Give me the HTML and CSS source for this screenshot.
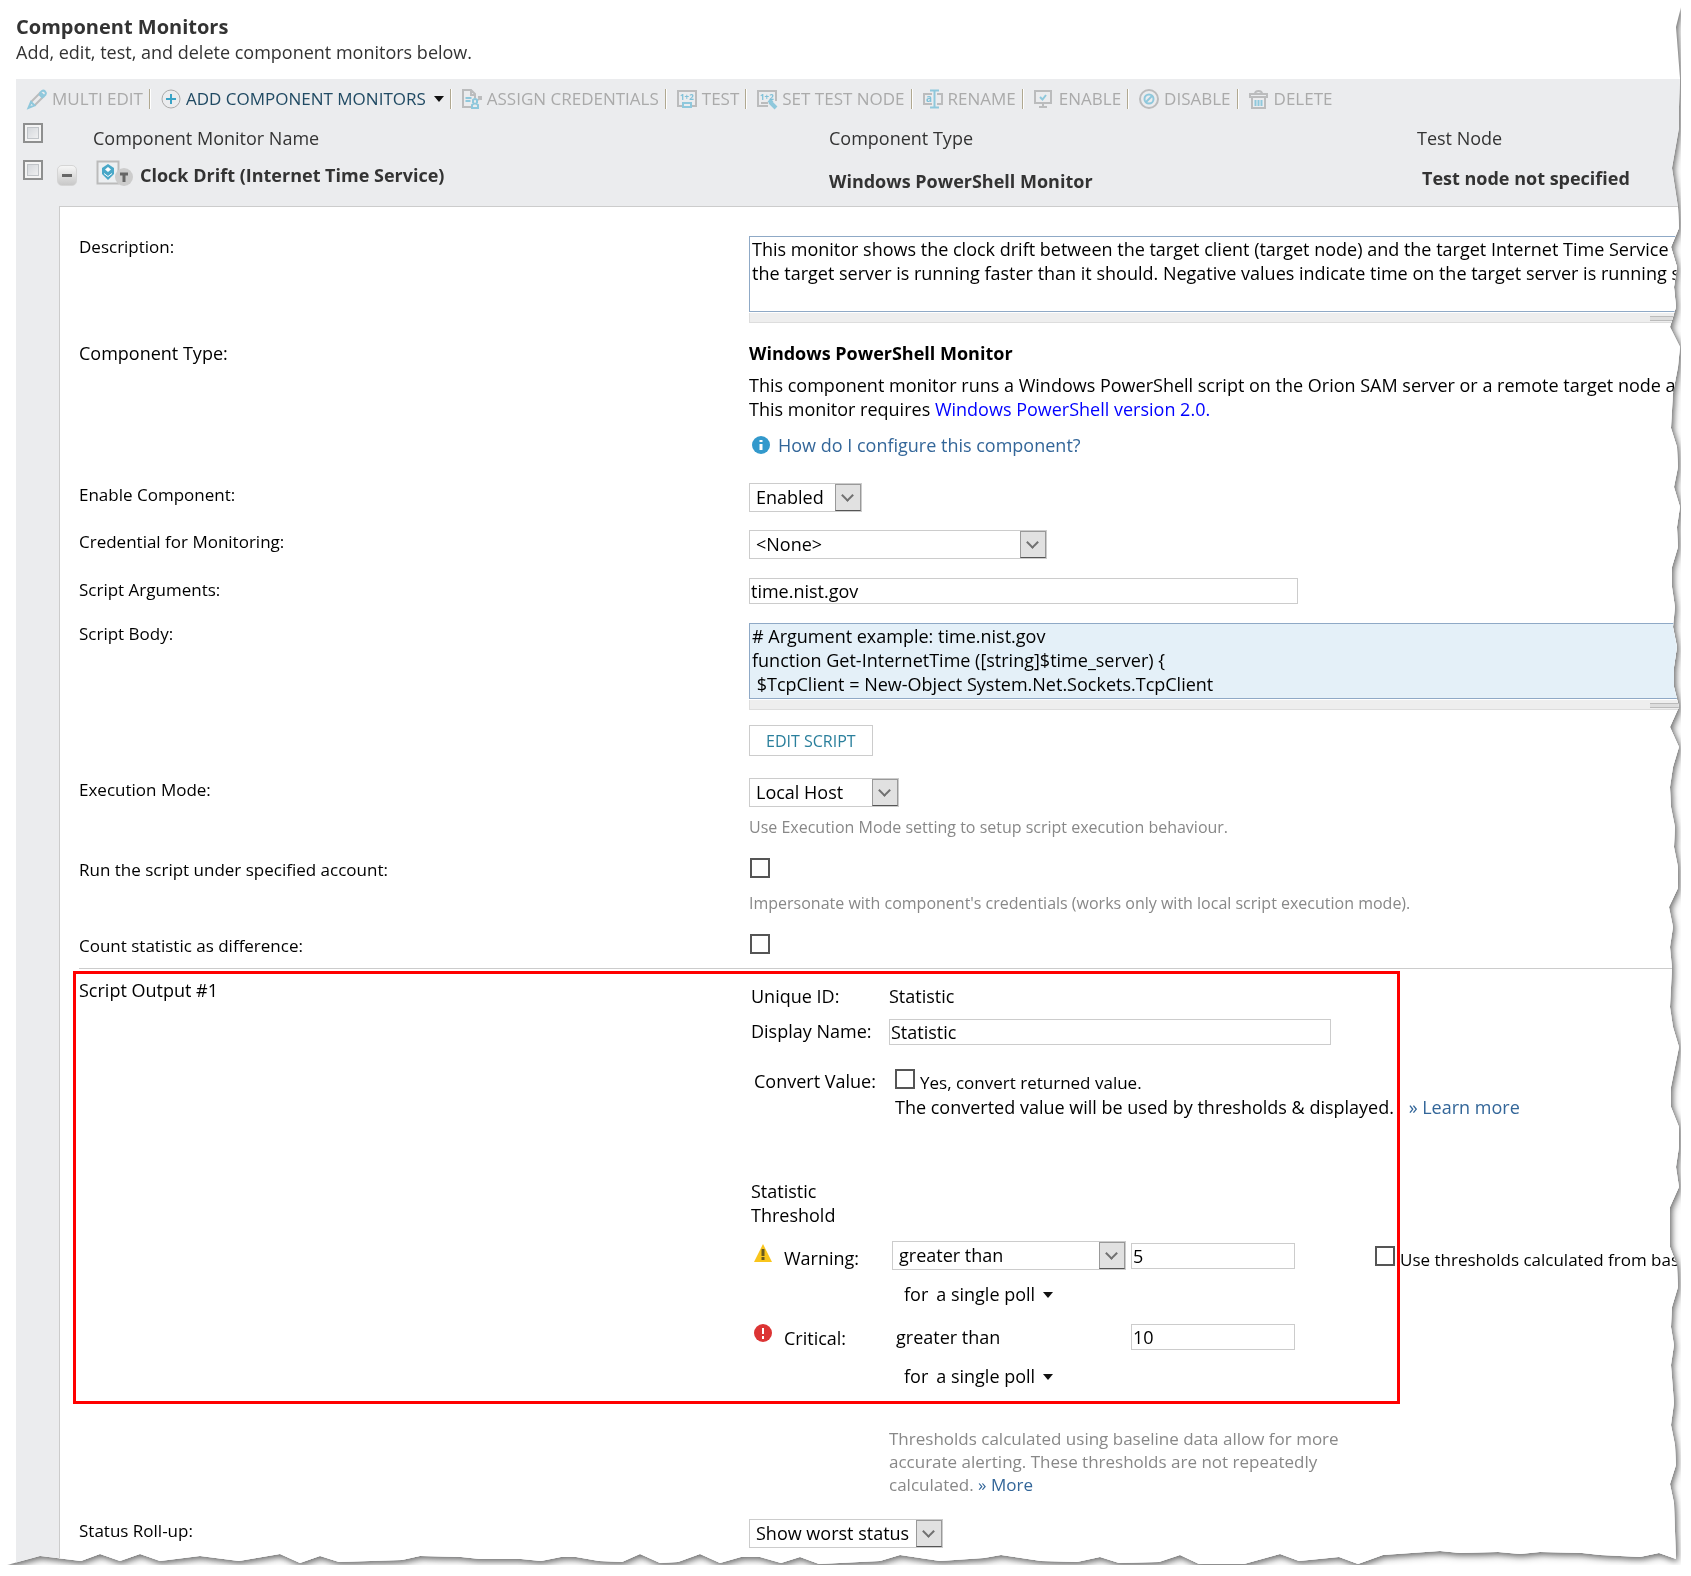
FILE: index.html
```html
<!DOCTYPE html>
<html lang="en">
<head>
    <meta charset="UTF-8">
    <meta name="viewport" content="width=device-width, initial-scale=1.0">
    <title>Component Monitors</title>
    <link rel="stylesheet" href="styles.css">
</head>
<body>

<div class="shadow">
<main class="sheet">
    <h1>Component Monitors</h1>
    <p class="intro">Add, edit, test, and delete component monitors below.</p>

    <div class="grid-panel">
        <div class="toolbar">
            <button type="button" disabled>
                <svg class="icon" viewBox="0 0 20 20"><path class="g" d="M4 13 13.500 3.500M7.500 16.500 17 7"/><path class="b" d="M13.500 3.500 15 2q1.500-1 3 .5t.5 3L17 7zM12 5l4 4M4 13l-2.500 6 6-2.500z"/></svg>
                MULTI EDIT
            </button>
            <button type="button" class="active">
                <svg class="icon" viewBox="0 0 20 20"><circle class="g2" cx="10" cy="10" r="9"/><path class="b2" d="M10 5v10M5 10h10"/></svg>
                ADD COMPONENT MONITORS
                <span class="caret"></span>
            </button>
            <button type="button" disabled>
                <svg class="icon" viewBox="0 0 20 20"><path class="g" d="M9 18H1V1h8l4 4v4M9 1v5h4M16 11l3-3M16 8h3v3"/><path class="b" d="M3.500 9h6M3.500 12h5M11 14V11q2-2 4 0v3M10 19v-3q3-3 6 0v3z"/></svg>
                ASSIGN CREDENTIALS
            </button>
            <button type="button" disabled>
                <svg class="icon" viewBox="0 0 20 20"><path class="g" d="M5 17H1V2h18v15h-4"/><path class="b" d="M6 14h8v4H6z"/><text x="3" y="11">1+2</text></svg>
                TEST
            </button>
            <button type="button" disabled>
                <svg class="icon" viewBox="0 0 20 20"><path class="g" d="M11 17H1V2h18v10M4 14h7"/><path class="b3" d="M13 13l6 6M12 14l3-3"/><text x="3" y="11">1+2</text></svg>
                SET TEST NODE
            </button>
            <button type="button" disabled>
                <svg class="icon" viewBox="0 0 20 20"><path class="g" d="M9 15H1V5h8M14 5h5v10h-5"/><path class="b" d="M7 1.500h9M11.500 1.500v17M7 18.500h9"/><text class="letter" x="3" y="13">a</text></svg>
                RENAME
            </button>
            <button type="button" disabled>
                <svg class="icon" viewBox="0 0 20 20"><path class="g" d="M1 2h16v12H1zM9 14v3M5 18h8"/><path class="b" d="M6 8l2.500 2.500L12 6"/></svg>
                ENABLE
            </button>
            <button type="button" disabled>
                <svg class="icon" viewBox="0 0 20 20"><circle class="g2" cx="10" cy="10" r="9"/><circle class="b" cx="10" cy="10" r="4.500"/><path class="b" d="M7 13l6-6"/></svg>
                DISABLE
            </button>
            <button type="button" disabled>
                <svg class="icon" viewBox="0 0 20 20"><path class="g" d="M1 5h17v3H1zM6 5q0-3 3.500-3T13 5M3 8v11h13V8"/><path class="b" d="M6.500 11v6M9.500 11v6M12.500 11v6"/></svg>
                DELETE
            </button>
        </div>

        <div class="grid-row grid-head">
            <input type="checkbox" class="classic" aria-label="Select all">
            <span>Component Monitor Name</span>
            <span>Component Type</span>
            <span>Test Node</span>
        </div>
        <div class="grid-row grid-item">
            <div class="pick">
                <input type="checkbox" class="classic" aria-label="Select Clock Drift">
                <button type="button" class="collapse" aria-label="Collapse"></button>
            </div>
            <div class="monitor">
                <svg class="monitor-icon" viewBox="0 0 37 26"><rect x="1.500" y="1.500" width="21" height="22" fill="#eceff1" stroke="#bbb" stroke-width="2"/><path d="M12 4l6 4v6L12 20l-6-6v-6z" fill="#49a8c8"/><path d="M12 7l3 2.500-3 2.500-3-2.500z" fill="#fff"/><path d="M8 13.500l4 3 4-3" fill="none" stroke="#fff"/><circle cx="28" cy="17" r="9" fill="#ccc"/><path d="M24 14h8M28 14v8" stroke="#666" stroke-width="3"/></svg>
                <strong>Clock Drift (Internet Time Service)</strong>
            </div>
            <strong class="type">Windows PowerShell Monitor</strong>
            <strong class="node">Test node not specified</strong>
        </div>

        <form class="details">
            <div class="row">
                <label for="description">Description:</label>
                <div class="resizable">
                    <textarea id="description">This monitor shows the clock drift between the target client (target node) and the target Internet Time Service
the target server is running faster than it should. Negative values indicate time on the target server is running s</textarea>
                    <div class="resizer"></div>
                </div>
            </div>

            <div class="row component-type">
                <span class="heading">Component Type:</span>
                <div>
                    <strong>Windows PowerShell Monitor</strong>
                    <p>This component monitor runs a Windows PowerShell script on the Orion SAM server or a remote target node a<br>
                    This monitor requires <a class="plain" href="#">Windows PowerShell version 2.0.</a></p>
                    <a class="help" href="#">
                        <svg viewBox="0 0 18 18"><circle cx="9" cy="9" r="9" fill="#3399cc"/><path d="M9 4v2M9 8v6" stroke="#fff" stroke-width="3"/></svg>
                        How do I configure this component?
                    </a>
                </div>
            </div>

            <div class="row">
                <label for="enabled">Enable Component:</label>
                <div class="select enabled"><select id="enabled"><option>Enabled</option><option>Disabled</option></select></div>
            </div>

            <div class="row loose">
                <label for="credential">Credential for Monitoring:</label>
                <div class="select credential"><select id="credential"><option>&lt;None&gt;</option></select></div>
            </div>

            <div class="row">
                <label for="arguments">Script Arguments:</label>
                <input type="text" class="arguments" id="arguments" value="time.nist.gov">
            </div>

            <div class="row script-body">
                <label for="script">Script Body:</label>
                <div class="resizable">
                    <textarea id="script" class="readonly" readonly># Argument example: time.nist.gov
function Get-InternetTime ([string]$time_server) {
 $TcpClient = New-Object System.Net.Sockets.TcpClient</textarea>
                    <div class="resizer"></div>
                    <button type="button" class="edit-script">EDIT SCRIPT</button>
                </div>
            </div>

            <div class="row loose">
                <label for="mode">Execution Mode:</label>
                <div>
                    <div class="select mode"><select id="mode"><option>Local Host</option><option>Remote Host</option></select></div>
                    <p class="hint">Use Execution Mode setting to setup script execution behaviour.</p>
                </div>
            </div>

            <div class="row loose">
                <label for="account">Run the script under specified account:</label>
                <div>
                    <input type="checkbox" id="account">
                    <p class="hint">Impersonate with component's credentials (works only with local script execution mode).</p>
                </div>
            </div>

            <div class="row">
                <label for="difference">Count statistic as difference:</label>
                <input type="checkbox" id="difference">
            </div>

            <div class="row output">
                <div class="highlight"></div>
                <span class="heading">Script Output #1</span>
                <div class="fields">
                    <span>Unique ID:</span>
                    <span>Statistic</span>

                    <label for="display">Display Name:</label>
                    <input type="text" class="display" id="display" value="Statistic">

                    <span class="convert-label">Convert Value:</span>
                    <div class="convert">
                        <div class="check">
                            <input type="checkbox" id="convert">
                            <label for="convert">Yes, convert returned value.</label>
                        </div>
                        <div class="note">The converted value will be used by thresholds &amp; displayed. <a href="#">» Learn more</a></div>
                    </div>

                    <span class="threshold-label">Statistic Threshold</span>

                    <label class="level" for="warning">
                        <svg viewBox="0 0 18 18"><path d="M9 0l9 18H0z" fill="#f9c51c"/><path d="M9 5v7M9 13v3" stroke="#6b5a1e" stroke-width="3"/></svg>
                        Warning:
                    </label>
                    <div class="threshold">
                        <div class="select operator"><select aria-label="Warning operator"><option>greater than</option><option>less than</option></select></div>
                        <input type="text" id="warning" value="5">
                        <div class="check baseline">
                            <input type="checkbox" id="baseline">
                            <label for="baseline">Use thresholds calculated from base</label>
                        </div>
                    </div>
                    <div class="poll"><span>for</span> <button type="button">a single poll <span class="caret"></span></button></div>

                    <label class="level" for="critical">
                        <svg viewBox="0 0 18 18"><circle cx="9" cy="9" r="9" fill="#dc3434"/><path d="M9 4v6M9 12v3" stroke="#fff" stroke-width="2"/></svg>
                        Critical:
                    </label>
                    <div class="threshold">
                        <span class="operator">greater than</span>
                        <input type="text" id="critical" value="10">
                    </div>
                    <div class="poll"><span>for</span> <button type="button">a single poll <span class="caret"></span></button></div>

                    <p class="baseline-note">Thresholds calculated using baseline data allow for more accurate alerting. These thresholds are not repeatedly calculated. <a href="#">» More</a></p>
                </div>
            </div>

            <div class="row rollup">
                <label for="rollup">Status Roll-up:</label>
                <div class="select status"><select id="rollup"><option>Show worst status</option><option>Show best status</option></select></div>
            </div>
        </form>
    </div>
</main>
</div>

</body>
</html>
```
FILE: styles.css
```css
*, *::before, *::after {
    box-sizing: border-box;
}

body {
    margin: 7px 10px 0 7px;
    background: #fff;
    color: #000;
    font-family: "Open Sans", "Noto Sans", sans-serif;
    font-size: 18px;
    line-height: 24px;
    overflow-x: hidden;
}

h1, p {
    margin: 0;
}

a {
    color: #336699;
    text-decoration: none;
}

button, input, select, textarea {
    font: inherit;
    color: inherit;
    margin: 0;
}

/* torn paper edge */
.shadow {
    filter: drop-shadow(0 0 3px rgba(0, 0, 0, 0.4)) drop-shadow(2px 3px 3px rgba(0, 0, 0, 0.4));
}

.sheet {
    background: #fff;
    padding: 6px 0 0 9px;
    overflow: hidden;
    clip-path: polygon(0 0, 100% 0,
        calc(100% - 5px) 20px, calc(100% - 1px) 71px, calc(100% - 2px) 100px, calc(100% - 2px) 121px,
        calc(100% - 9px) 161px, calc(100% - 3px) 200px, calc(100% - 2px) 221px, calc(100% - 10px) 240px,
        calc(100% - 4px) 260px, calc(100% - 7px) 280px, calc(100% - 5px) 300px, calc(100% - 11px) 320px,
        calc(100% - 1px) 340px, calc(100% - 3px) 360px, calc(100% - 8px) 386px, calc(100% - 10px) 421px,
        calc(100% - 4px) 440px, calc(100% - 3px) 460px, calc(100% - 7px) 480px, calc(100% - 1px) 500px,
        calc(100% - 4px) 520px, calc(100% - 3px) 540px, calc(100% - 9px) 560px, calc(100% - 9px) 580px,
        calc(100% - 6px) 600px, calc(100% - 8px) 620px, calc(100% - 4px) 640px, calc(100% - 7px) 660px,
        calc(100% - 7px) 680px, calc(100% - 2px) 700px, calc(100% - 11px) 720px, calc(100% - 2px) 740px,
        calc(100% - 8px) 760px, calc(100% - 11px) 780px, calc(100% - 10px) 800px, calc(100% - 6px) 820px,
        calc(100% - 7px) 840px, calc(100% - 3px) 860px, calc(100% - 3px) 881px, calc(100% - 12px) 900px,
        calc(100% - 8px) 920px, calc(100% - 11px) 940px, calc(100% - 9px) 961px, calc(100% - 11px) 1000px,
        calc(100% - 8px) 1020px, calc(100% - 2px) 1040px, calc(100% - 10px) 1080px, calc(100% - 10px) 1100px,
        calc(100% - 2px) 1120px, calc(100% - 2px) 1140px, calc(100% - 5px) 1160px, calc(100% - 2px) 1180px,
        calc(100% - 11px) 1200px, calc(100% - 11px) 1240px, calc(100% - 4px) 1258px, calc(100% - 3px) 1280px,
        calc(100% - 9px) 1300px, calc(100% - 10px) 1320px, calc(100% - 7px) 1338px, calc(100% - 10px) 1358px,
        calc(100% - 7px) 1396px, calc(100% - 10px) 1418px, calc(100% - 6px) 1438px, calc(100% - 5px) 1458px,
        calc(100% - 11px) 1477px, calc(100% - 7px) 1496px, calc(100% - 5px) calc(100% - 6px),
        1652px calc(100% - 12px), 1633px calc(100% - 8px), 1593px calc(100% - 10px), 1575px calc(100% - 12px),
        1533px calc(100% - 13px), 1513px calc(100% - 11px), 1491px calc(100% - 13px), 1453px calc(100% - 12px),
        1433px calc(100% - 14px), 1376px calc(100% - 10px), 1351px calc(100% - 1px), 1332px calc(100% - 8px),
        1292px calc(100% - 4px), 1273px calc(100% - 11px), 1237px calc(100% - 1px), 1192px calc(100% - 1px),
        1173px calc(100% - 10px), 1152px calc(100% - 3px), 1112px calc(100% - 2px), 1093px calc(100% - 8px),
        1070px calc(100% - 3px), 1034px calc(100% - 4px), 994px calc(100% - 10px), 977px calc(100% - 7px),
        933px calc(100% - 4px), 893px calc(100% - 10px), 873px calc(100% - 4px), 812px calc(100% - 1px),
        793px calc(100% - 8px), 774px calc(100% - 2px), 753px calc(100% - 8px), 734px calc(100% - 8px),
        713px calc(100% - 2px), 693px calc(100% - 11px), 671px calc(100% - 3px), 653px calc(100% - 2px),
        633px calc(100% - 11px), 615px calc(100% - 3px), 592px calc(100% - 4px), 569px calc(100% - 8px),
        554px calc(100% - 8px), 534px calc(100% - 4px), 514px calc(100% - 6px), 473px calc(100% - 6px),
        454px calc(100% - 8px), 413px calc(100% - 9px), 395px calc(100% - 5px), 332px calc(100% - 3px),
        313px calc(100% - 9px), 293px calc(100% - 2px), 273px calc(100% - 11px), 232px calc(100% - 4px),
        193px calc(100% - 9px), 153px calc(100% - 4px), 133px calc(100% - 11px), 113px calc(100% - 4px),
        93px calc(100% - 11px), 74px calc(100% - 4px), 33px calc(100% - 9px), 0 100%);
}

h1 {
    color: #333;
    font-size: 20px;
    line-height: 27px;
}

.intro {
    color: #333;
}

.grid-panel {
    margin-top: 15px;
    background: #ebecee;
    color: #333;
}

/* toolbar */
.toolbar {
    display: flex;
    height: 38px;
    padding-top: 2px;
    align-items: center;
    font-size: 17px;
}

.toolbar button {
    display: flex;
    align-items: center;
    gap: 5px;
    height: 20px;
    padding: 0 6px 0 11px;
    border: 0;
    border-right: 1px solid #b0a890;
    box-shadow: 1px 0 #fff;
    background: none;
    color: #aaaaaa;
    white-space: nowrap;
}

.toolbar button:last-child {
    border: 0;
    box-shadow: none;
}

.toolbar .active {
    color: #204a63;
}

.icon {
    width: 20px;
    height: 20px;
    overflow: visible;
}

.icon path, .icon circle {
    fill: none;
    stroke-width: 2;
}

.icon .g, .icon .g2 {
    stroke: #bbbcbd;
}

.icon .b, .icon .b2, .icon .b3 {
    stroke: #8fc8dc;
}

.icon .b3 {
    stroke-width: 4;
}

.active .g2 {
    stroke: #aaaaaa;
    stroke-width: 1;
}

.active .b2 {
    stroke: #3aa3c6;
}

.icon text {
    fill: #7fc0d8;
    font-size: 8px;
    font-weight: bold;
}

.icon .letter {
    font-size: 10px;
}

.caret {
    display: inline-block;
    width: 10px;
    margin-left: 3px;
    border: 5px solid transparent;
    border-top: 6px solid #111;
    border-bottom: 0;
}

/* monitor list */
.grid-row {
    display: grid;
    grid-template-columns: 77px 736px 588px 1fr;
}

.grid-head {
    height: 43px;
    padding-top: 6px;
}

.grid-head span {
    padding-top: 3px;
}

.grid-item {
    height: 46px;
}

.grid-item .node {
    padding: 6px 0 0 5px;
}

.grid-item .type {
    padding-top: 9px;
}

.pick, .monitor {
    display: flex;
    align-items: flex-start;
}

.monitor {
    gap: 7px;
    padding-left: 3px;
}

.monitor strong {
    padding-top: 3px;
}

.monitor-icon {
    width: 37px;
    height: 26px;
}

.classic {
    appearance: none;
    width: 20px;
    height: 20px;
    margin-left: 7px;
    border: 2px solid #8e8f8f;
    background: linear-gradient(135deg, #cdd1d6, #f6f6f6);
    box-shadow: inset 0 0 0 2px #f4f4f4, inset 0 0 0 3px #c0c4c8;
}

.collapse {
    width: 20px;
    height: 21px;
    margin: 5px 0 0 14px;
    padding: 0;
    border: 1px solid #d5d5d5;
    border-radius: 5px;
    background: linear-gradient(#f6f6f6, #c8c8c8);
}

.collapse::before {
    content: "";
    display: block;
    width: 10px;
    height: 3px;
    margin: 0 auto;
    background: #666;
}

/* details form */
.details {
    margin-left: 43px;
    padding: 28px 0 17px 19px;
    border: 1px solid #ccc;
    border-width: 1px 0 0 1px;
    background: #fff;
    color: #000;
}

.row {
    display: grid;
    grid-template-columns: 670px minmax(0, 1fr);
    align-items: start;
    margin-bottom: 18px;
}

.row > label {
    font-size: 17px;
}

.loose {
    margin-bottom: 19px;
}

.resizable {
    width: 1838px;
    margin-top: 1px;
}

textarea {
    display: block;
    width: 100%;
    height: 76px;
    padding: 0 2px;
    border: 1px solid #8fa9c6;
    border-radius: 0;
    background: #fff;
    white-space: pre;
    overflow: hidden;
    resize: none;
}

textarea.readonly {
    background: #e4f0f8;
}

.resizer {
    height: 10px;
    margin-top: 1px;
    padding-top: 3px;
    border: 1px solid #ddd;
    border-top: 0;
    background: #eee;
}

.resizer::before {
    content: "";
    display: block;
    width: 36px;
    height: 5px;
    margin: 0 auto;
    border: 1px solid #bbb;
    border-width: 1px 0;
    background: #ddd;
}

.component-type p {
    margin: 8px 0 12px;
    white-space: nowrap;
}

.component-type {
    margin-bottom: 26px;
}

a.plain {
    color: #0000ff;
}

.help {
    display: flex;
    align-items: center;
    gap: 8px;
    padding-left: 3px;
}

.help svg, .level svg {
    width: 18px;
    height: 18px;
}

input[type="text"] {
    height: 26px;
    padding: 0 1px;
    border: 1px solid #ccc;
    border-radius: 0;
    background: #fff;
}

.arguments {
    width: 549px;
}

.display {
    width: 442px;
}

.select {
    position: relative;
    height: 29px;
}

.select select {
    appearance: none;
    width: 100%;
    height: 29px;
    padding: 0 28px 1px 6px;
    border: 1px solid #ccc;
    border-radius: 0;
    background: #fff;
}

/* drop-down button and its chevron */
.select::before {
    content: "";
    position: absolute;
    top: 1px;
    right: 1px;
    width: 26px;
    height: 27px;
    border: 1px solid #999;
    border-bottom-color: #555;
    background: #e1e1e1;
    pointer-events: none;
}

.select::after {
    content: "";
    position: absolute;
    top: 8px;
    right: 10px;
    width: 9px;
    height: 9px;
    border: 2px solid #707070;
    border-width: 0 2px 2px 0;
    transform: rotate(45deg);
    pointer-events: none;
}

.enabled {
    width: 113px;
}

.credential {
    width: 298px;
}

.mode {
    width: 150px;
}

.operator {
    width: 234px;
}

.status {
    width: 194px;
}

.script-body {
    margin-bottom: 22px;
}

.edit-script {
    height: 31px;
    margin-top: 15px;
    padding: 0 16px;
    border: 1px solid #ccc;
    background: #fff;
    color: #2a7f9c;
    font-size: 16px;
}

.hint {
    margin-top: 8px;
    color: #888;
    font-size: 16px;
}

.row input[type="checkbox"] {
    appearance: none;
    display: block;
    width: 20px;
    height: 20px;
    margin-left: 1px;
    border: 2px solid #555;
    background: #fff;
}

input[type="checkbox"] + .hint {
    margin-top: 13px;
}

/* script output */
.output {
    position: relative;
    margin-top: -8px;
    margin-bottom: 23px;
    padding-top: 9px;
    border-top: 1px solid #ccc;
}

.highlight {
    position: absolute;
    top: 2px;
    left: -6px;
    width: 1327px;
    height: 433px;
    border: 3px solid #f00;
    pointer-events: none;
}

.fields {
    display: grid;
    grid-template-columns: 138px minmax(0, 1fr);
    align-items: start;
    padding: 6px 0 0 2px;
}

.display {
    margin-top: 11px;
}

.fields > label[for="display"] {
    margin-top: 11px;
}

.convert-label {
    margin-top: 24px;
    padding-left: 3px;
}

.convert {
    margin: 24px 0 60px;
    padding-left: 6px;
}

.check {
    display: flex;
    gap: 5px;
    font-size: 17px;
    white-space: nowrap;
}

.check label {
    padding-top: 2px;
}

.convert .check input {
    margin-left: 0;
}

.note {
    white-space: nowrap;
}

.note a {
    margin-left: 10px;
}

.threshold-label {
    grid-column: 1 / 2;
    width: 100px;
}

.level {
    grid-column: 1;
    display: flex;
    gap: 12px;
    align-self: end;
    padding-left: 3px;
}

.level svg {
    margin-top: -2px;
}

.threshold {
    grid-column: 2;
    display: flex;
    align-items: center;
    gap: 5px;
    margin-top: 14px;
    padding-left: 3px;
}

.threshold > * {
    flex-shrink: 0;
}

.threshold input[type="text"] {
    width: 164px;
}

.threshold span.operator {
    padding-left: 4px;
}

.baseline {
    align-self: flex-end;
    margin-left: 74px;
    height: 24px;
}

.poll {
    grid-column: 2;
    display: flex;
    gap: 8px;
    margin-top: 12px;
    padding-left: 15px;
}

.poll + .level + .threshold {
    margin-top: 18px;
}

.poll + .level + .threshold + .poll {
    margin-top: 14px;
}

.poll button {
    padding: 0;
    border: 0;
    background: none;
}

.poll .caret {
    margin-bottom: 3px;
}

.baseline-note {
    grid-column: 2;
    width: 450px;
    margin-top: 39px;
    color: #888;
    font-size: 17px;
    line-height: 23px;
}

.rollup {
    margin-bottom: 0;
}
```
